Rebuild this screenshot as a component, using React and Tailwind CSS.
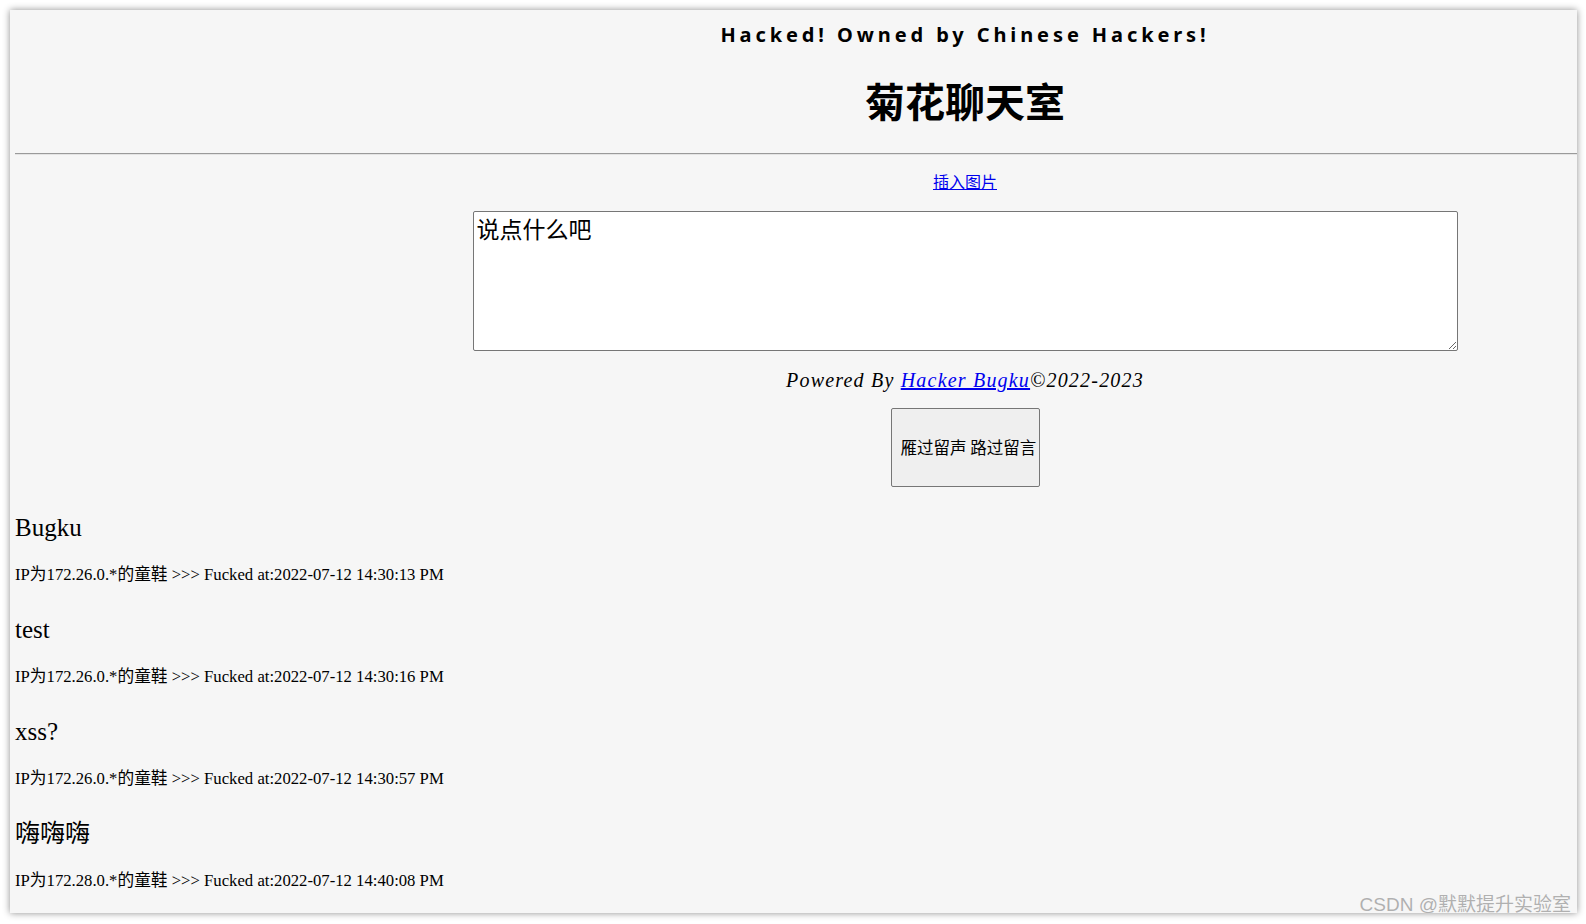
export default function App() {
  const messages = [
    { name: 'Bugku', ip: '172.26.0.*', time: '2022-07-12 14:30:13 PM' },
    { name: 'test', ip: '172.26.0.*', time: '2022-07-12 14:30:16 PM' },
    { name: 'xss?', ip: '172.26.0.*', time: '2022-07-12 14:30:57 PM' },
    { name: '嗨嗨嗨', ip: '172.28.0.*', time: '2022-07-12 14:40:08 PM' },
  ];

  return (
    <div className="w-[1586px] h-[924px] bg-white pl-[10px] pt-[10px] overflow-hidden">
      {/* browser page frame */}
      <div className="relative w-[1567px] h-[903px] bg-[#f6f6f6] shadow-[0_0_7px_rgba(0,0,0,0.45)] pt-[11px] text-black">
        {/* Header */}
        <div className="pl-[343px] text-center">
          <div className="font-['Noto_Sans',sans-serif] font-bold text-[20px] leading-[28px] tracking-[3.9px]">
            Hacked! Owned by Chinese Hackers!
          </div>
          <h1 className="mt-[27px] font-['Noto_Sans_CJK_SC',sans-serif] font-bold text-[40px] leading-[48px]">
            菊花聊天室
          </h1>
        </div>

        <div className="ml-[5px] mt-[29px] border-t border-t-[#9a9a9a] border-b border-b-[#e4e4e4]" />

        {/* Post form */}
        <div className="pl-[343px] flex flex-col items-center">
          <a
            href="#"
            className="mt-[14px] font-['Noto_Sans_CJK_SC',sans-serif] text-[16px] leading-[24px] text-[#0000ee] underline"
          >
            插入图片
          </a>
          <textarea
            defaultValue="说点什么吧"
            className="mt-[18px] w-[985px] h-[140px] bg-white border border-[#767676] rounded-[2px] px-[3px] pt-[2px] pb-0 font-['Noto_Sans_CJK_SC',sans-serif] text-[23px] leading-[28px] text-black outline-none"
          />
          <div className="mt-[15px] font-['Liberation_Serif',serif] italic text-[20px] leading-[28px] tracking-[1.2px]">
            Powered By{' '}
            <a href="#" className="text-[#0000ee] underline">
              Hacker Bugku
            </a>
            ©2022-2023
          </div>
          <button className="mt-[14px] w-[149px] h-[79px] bg-[#efefef] border border-[#767676] rounded-[2px] flex items-center pl-[9px] whitespace-nowrap font-['Noto_Sans_CJK_SC',sans-serif] text-[16.5px] text-black">
            雁过留声 路过留言
          </button>
        </div>

        {/* Messages */}
        <div className="pl-[5px] mt-[25px] flex flex-col gap-[27px] font-['Liberation_Serif','Noto_Sans_CJK_SC',serif]">
          {messages.map((m) => (
            <div key={m.time}>
              <div className="text-[25px] leading-[32px]">{m.name}</div>
              <div className="mt-[19px] text-[16.7px] leading-[24px] whitespace-nowrap">
                IP为{m.ip}的童鞋 &gt;&gt;&gt; Fucked at:{m.time}
              </div>
            </div>
          ))}
        </div>

        {/* watermark */}
        <div className="absolute right-[6px] bottom-[-2px] font-['Liberation_Sans','Noto_Sans_CJK_SC',sans-serif] text-[19px] leading-[20px] text-[#b0b0b0] [text-shadow:0_0_1px_rgba(255,255,255,0.9)]">
          CSDN @默默提升实验室
        </div>
      </div>
    </div>
  );
}
